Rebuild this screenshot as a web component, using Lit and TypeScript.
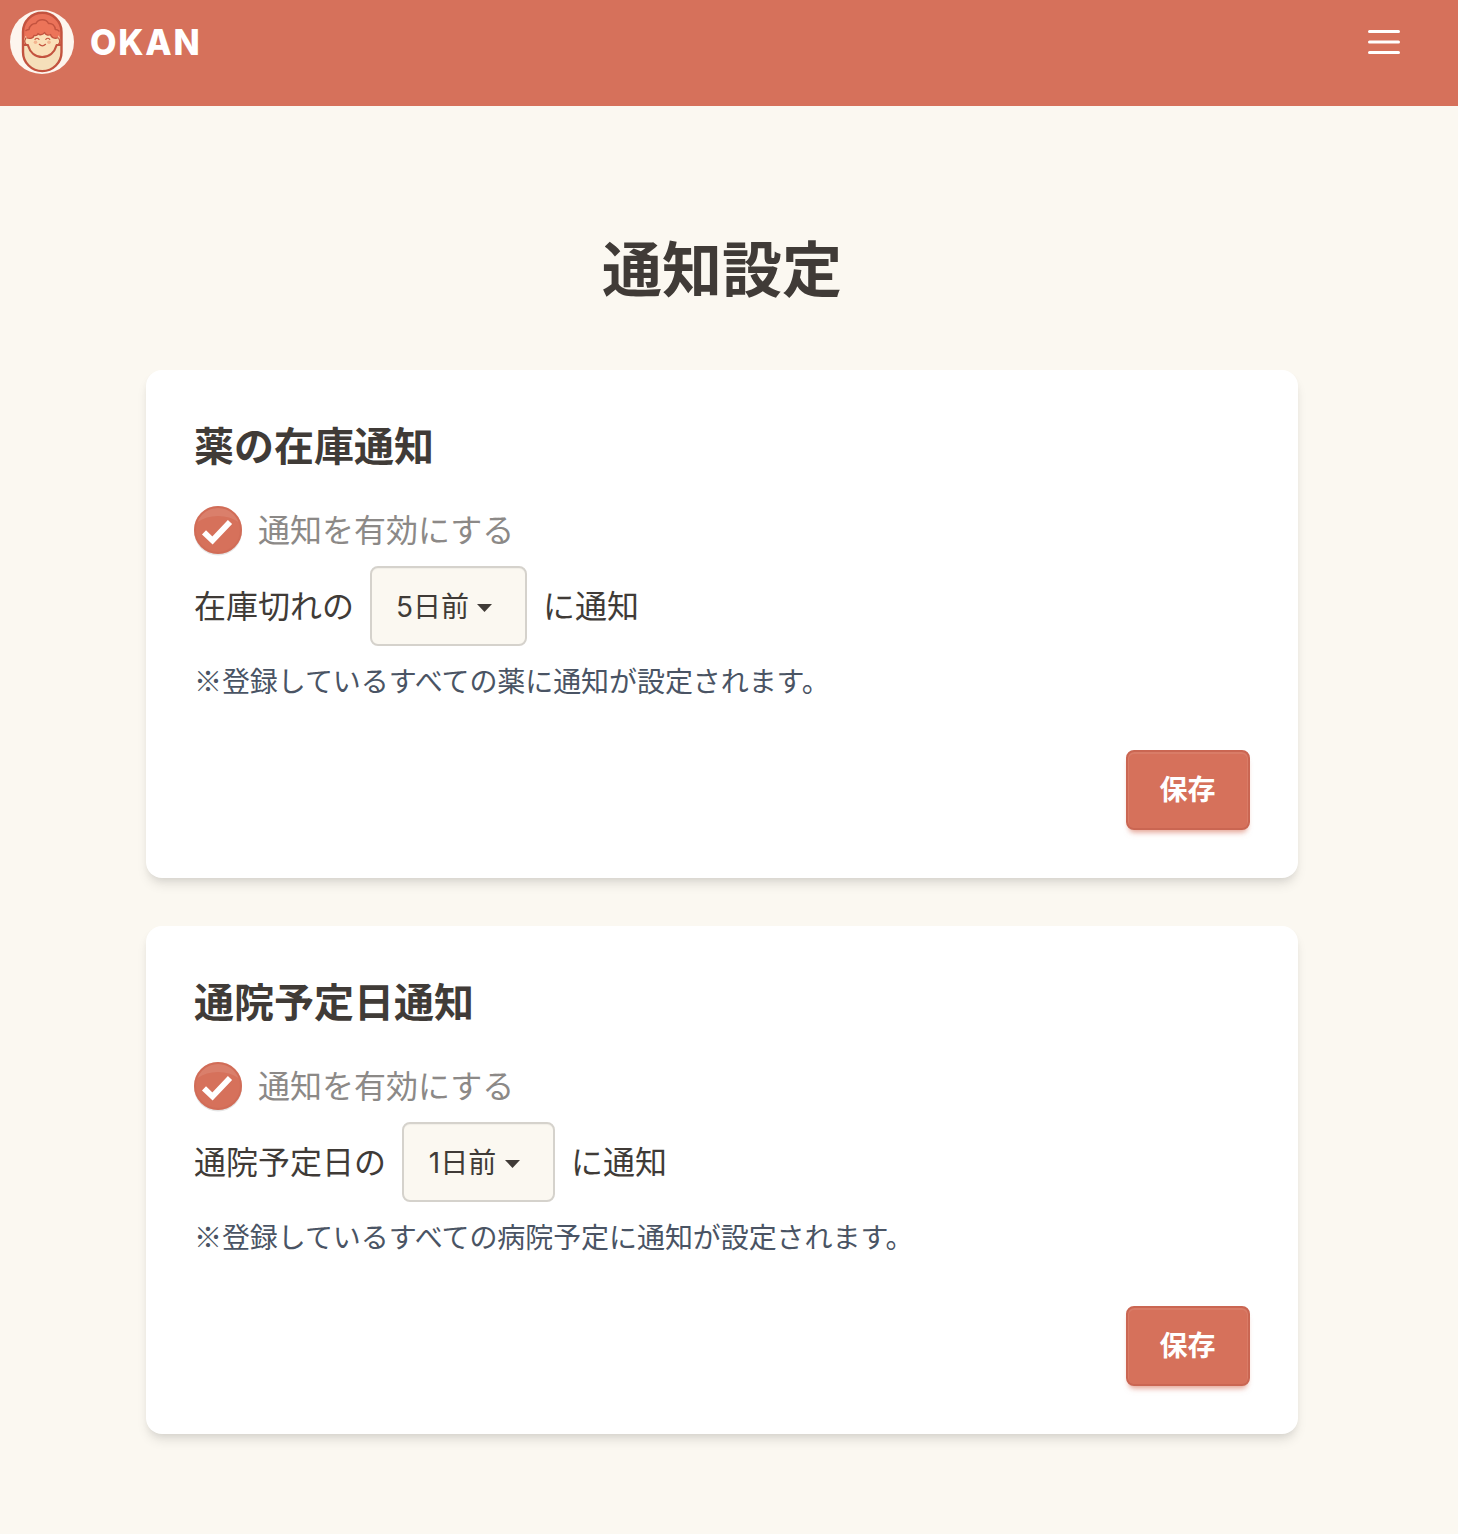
import { LitElement, html, css } from "lit";
import { customElement, property } from "lit/decorators.js";

const FONT = css`Inter, "Noto Sans CJK JP", sans-serif`;

@customElement("okan-logo")
class OkanLogo extends LitElement {
  static styles = css`
    :host { display: block; width: 64px; height: 64px; }
    .logo { display: block; }
  `;
  render() {
    return html`<svg class="logo" width="64" height="64" viewBox="0 0 64 64" fill="none">
      <circle cx="32" cy="32" r="32" fill="#fdf5ee" />
      <rect x="13" y="2.7" width="38.5" height="58.4" rx="19.2" fill="#ea7259" />
      <path d="M15 27 C12 33 16 35.5 18 35 C20 43 26 47 32.2 47 C38.5 47 44.5 43 46.5 35 C49 35 52 32 49.5 27 L45 20 L20 20 Z" fill="#fae0b9" />
      <path d="M13 35 H18 C20 42 25.5 47 32.2 47 C39 47 44.500 42 46.500 35 H51.500 V42 A19.200 19.200 0 0 1 13 42 Z" fill="#f5dfba" />
      <path d="M17 28 C14.500 24.500 16 20.500 19 19.500 C19.500 15.500 23 13 26 13.500 C28.500 8.500 36 8.500 38.500 13.500 C42 12.800 45 15.500 45.300 19.500 C49 21 50 25 47.500 28 C44 29 41 27 40.500 24.500 C38 25.500 35.500 25 34.500 22.500 C33 25 29.500 25.500 28 23.500 C26 26 24.500 25.500 24 25.500 C23.500 28 20.500 29 17 28 Z" fill="#ec7459" />
      <g stroke="#c3533f" stroke-linecap="round" stroke-linejoin="round">
        <path stroke-width="1.500" d="M16 20.500 C17 19.800 18 19.500 19 19.500 C19.500 15.500 23 13 26 13.500 C28.500 8.500 36 8.500 38.500 13.500 C42 12.800 45 15.500 45.300 19.500 C46.500 19.500 48 20 49 21" />
        <path stroke-width="1.300" d="M17 28 C20.500 29 23.500 28 24 25.500 C26 26 27.500 25 28 23.500 C29.500 25.500 33 25 34.500 22.500 C35.500 25 38 25.500 40.500 24.500 C41 27 44 29 47.500 28" />
        <path stroke-width="1.300" d="M15.800 28 C13.500 32 15.500 35 18 35 M48.700 28 C51 32 49 35 46.500 35" />
        <path stroke-width="2.200" d="M14 35 H17.800 C20 42.500 25.500 47 32.200 47 C39 47 44.500 42.500 46.700 35 H50.500" />
        <rect x="13" y="2.700" width="38.500" height="58.400" rx="19.200" stroke-width="2.400" />
        <path stroke-width="1.200" d="M25 29.300 Q27 27.200 29 29.300 M35.800 29.300 Q37.800 27.200 39.800 29.300 M29.300 34.300 Q32.400 37.300 35.500 34.300" />
      </g>
      <circle cx="25.500" cy="32.200" r="1.800" fill="#f3b48f" />
      <circle cx="39" cy="32.200" r="1.800" fill="#f3b48f" />
    </svg>`;
  }
}

@customElement("notice-card")
class NoticeCard extends LitElement {
  @property() heading = "";
  @property() label = "";
  @property() days = "";
  @property() note = "";

  static styles = css`
    :host {
      display: block;
      font-family: ${FONT};
      color: #403b37;
    }
    .card {
      box-sizing: border-box;
      height: 508px;
      padding: 48px;
      border-radius: 16px;
      background: #fff;
      box-shadow: 0 8px 12px -2px rgb(0 0 0 / 0.1), 0 4px 8px -4px rgb(0 0 0 / 0.1);
      display: flex;
      flex-direction: column;
      white-space: nowrap;
    }
    .heading { box-sizing: border-box; height: 56px; margin: 0 0 32px; font-size: 40px; line-height: 58px; font-weight: 700; }
    .toggle { display: flex; align-items: center; gap: 16px; height: 48px; font-size: 32px; line-height: 48px; color: #8c8987; }
    .check { display: block; width: 48px; height: 48px; overflow: visible; }
    .timing { display: flex; align-items: center; gap: 16px; margin-top: 12px; height: 80px; font-size: 32px; line-height: 48px; }
    .text { padding-top: 1px; }
    .select {
      box-sizing: border-box;
      height: 80px;
      padding: 0 33px 0 24px;
      border: 2px solid #d5d2cc;
      border-radius: 8px;
      background: #fbf8f1;
      box-shadow: inset 0 2px 1px -1px rgb(0 0 0 / 0.04);
      display: flex;
      align-items: center;
      gap: 8px;
      font: inherit;
      font-size: 28px;
      color: inherit;
    }
    .days { min-width: 69px; padding-top: 1px; text-align: center; }
    .caret { display: block; margin-top: 4px; }
    .note { margin: 14px 0 50px; font-family: "Noto Sans CJK JP", sans-serif; font-size: 28px; line-height: 40px; letter-spacing: -0.07px; color: #4a5464; }
    .save {
      box-sizing: border-box;
      align-self: flex-end;
      width: 124px;
      height: 80px;
      padding: 0 1px 0 0;
      border: 2px solid #ca6652;
      border-radius: 8px;
      background: #d6715b;
      box-shadow: inset 0 1px 0 1px rgb(255 255 255 / 0.08), 0 6px 6px -4px rgb(214 113 91 / 0.5), 0 4px 4px -2px rgb(214 113 91 / 0.3);
      font-family: inherit;
      font-size: 28px;
      font-weight: 700;
      line-height: 40px;
      color: #fff;
    }
  `;

  render() {
    return html`<section class="card">
      <h2 class="heading">${this.heading}</h2>
      <div class="toggle">
        <svg class="check" viewBox="0 0 48 48">
          <circle cx="24" cy="25.500" r="24" fill="#000" opacity="0.1" />
          <circle cx="24" cy="24" r="24" fill="#d6715b" />
          <path d="M3.500 16 A22 22 0 0 1 44.500 16 Q36 10 24 10 Q12 10 3.500 16Z" fill="#fff" opacity="0.1" />
          <circle cx="24" cy="24" r="23" fill="none" stroke="#ca6652" stroke-width="2" opacity="0.4" />
          <path d="M10 26.300 L18.500 34.500 L36 16" fill="none" stroke="#fff" stroke-width="5.800" />
        </svg>
        <span class="text">通知を有効にする</span>
      </div>
      <div class="timing">
        <span class="text">${this.label}</span>
        <button class="select">
          <span class="days">${this.days}</span>
          <svg class="caret" width="15" height="8" viewBox="0 0 15 8"><path d="M0 0H15L7.500 8Z" fill="#403b37" /></svg>
        </button>
        <span class="text">に通知</span>
      </div>
      <p class="note">${this.note}</p>
      <button class="save">保存</button>
    </section>`;
  }
}

@customElement("app-root")
class AppRoot extends LitElement {
  static styles = css`
    :host {
      display: block;
      min-height: 1534px;
      background: #fbf8f1;
      font-family: ${FONT};
      color: #403b37;
    }
    .header {
      box-sizing: border-box;
      height: 106px;
      padding: 10px 56px 32px 10px;
      background: #d6715b;
      display: flex;
      align-items: center;
      justify-content: space-between;
    }
    .brand { display: flex; align-items: center; gap: 16px; color: #fff; }
    .name { font-size: 36px; font-weight: 800; line-height: 56px; letter-spacing: 1.8px; transform: scaleX(0.953); transform-origin: left center; }
    .menu { display: block; }
    .main { box-sizing: border-box; width: 1444px; padding: 124px 146px 0; display: flex; flex-direction: column; }
    .title { margin: 0 0 60px; font-size: 60px; line-height: 80px; font-weight: 700; text-align: center; }
    .cards { display: flex; flex-direction: column; gap: 48px; }
  `;

  render() {
    return html`
      <header class="header">
        <div class="brand"><okan-logo></okan-logo><span class="name">OKAN</span></div>
        <svg class="menu" width="36" height="36" viewBox="0 0 36 36" fill="none" stroke="#fff" stroke-width="3" stroke-linecap="round">
          <path d="M3.500 7.500H32.500M3.500 18H32.500M3.500 28.500H32.500" />
        </svg>
      </header>
      <main class="main">
        <h1 class="title">通知設定</h1>
        <div class="cards">
          <notice-card heading="薬の在庫通知" label="在庫切れの" days="5日前" note="※登録しているすべての薬に通知が設定されます。"></notice-card>
          <notice-card heading="通院予定日通知" label="通院予定日の" days="1日前" note="※登録しているすべての病院予定に通知が設定されます。"></notice-card>
        </div>
      </main>
    `;
  }
}
